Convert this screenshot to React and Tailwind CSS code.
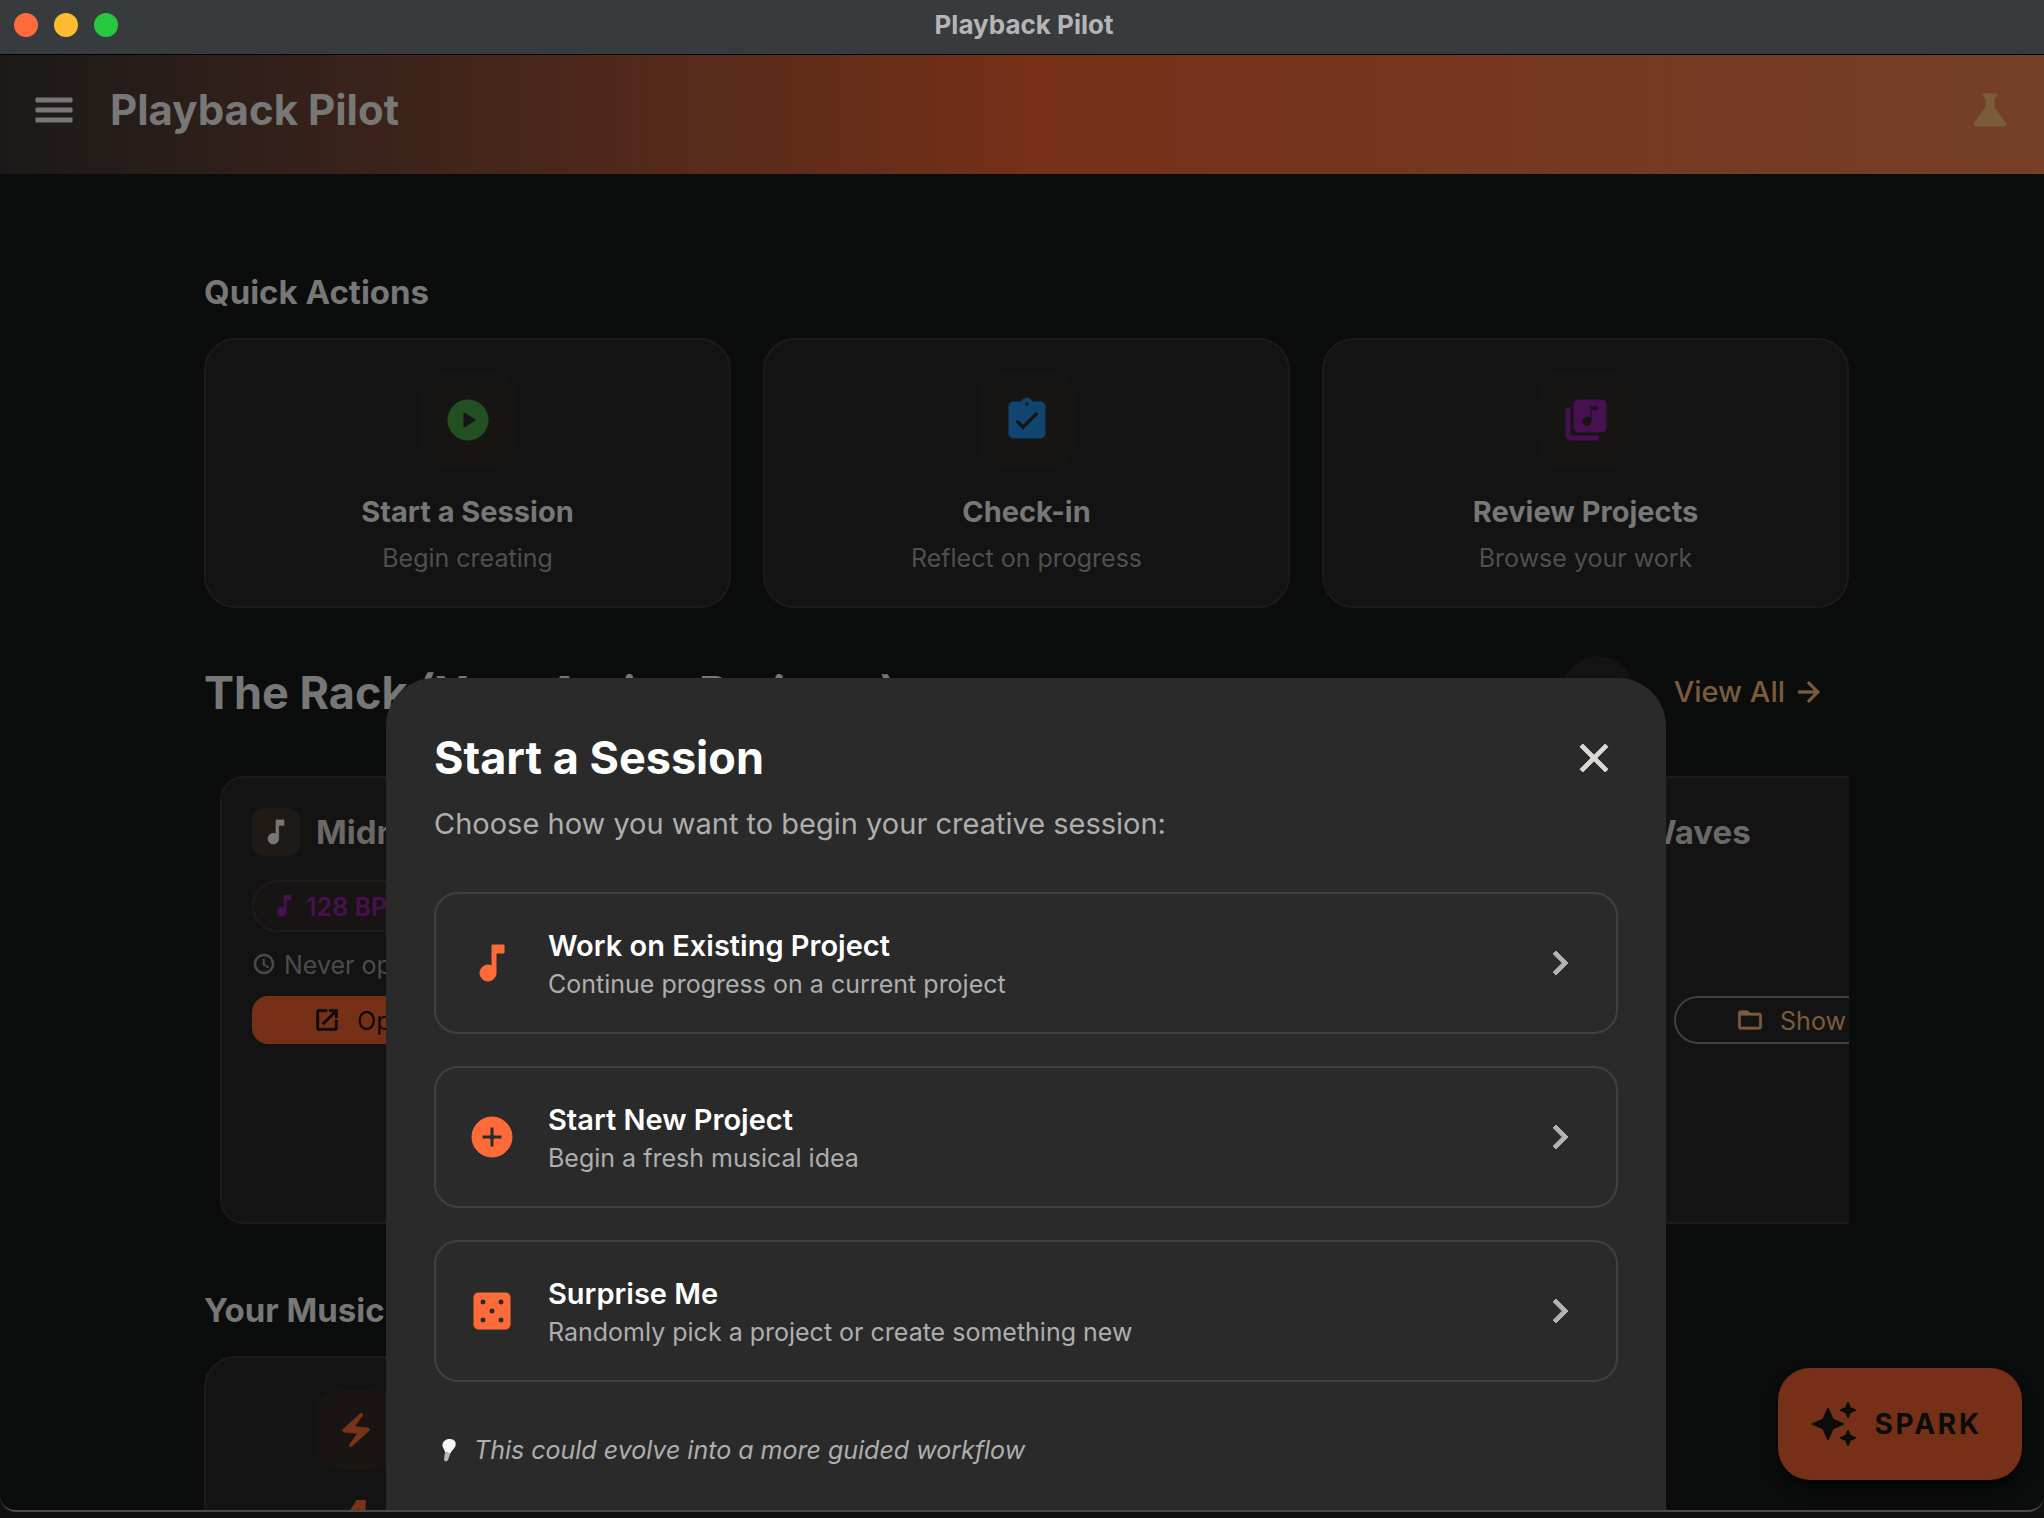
import React from 'react';
import {
  MdMenu,
  MdScience,
  MdPlayCircle,
  MdAssignmentTurnedIn,
  MdLibraryMusic,
  MdArrowForward,
  MdRefresh,
  MdMusicNote,
  MdSchedule,
  MdOpenInNew,
  MdFolderOpen,
  MdElectricBolt,
  MdAutoAwesome,
  MdClose,
  MdChevronRight,
  MdAddCircle,
  MdCasino,
} from 'react-icons/md';

const quickActions = [
  { title: 'Start a Session', text: 'Begin creating', Icon: MdPlayCircle, color: 'text-[#235023]' },
  { title: 'Check-in', text: 'Reflect on progress', Icon: MdAssignmentTurnedIn, color: 'text-[#0f4570]' },
  { title: 'Review Projects', text: 'Browse your work', Icon: MdLibraryMusic, color: 'text-[#471151]' },
];

const projects = [
  { name: 'Midnight Groove', bpm: '128 BPM' },
  { name: 'Golden Hour', bpm: '96 BPM' },
  { name: 'Electrical Waves', bpm: '140 BPM' },
];

const stats = [
  { value: '4', label: 'Sessions' },
  { value: '3', label: 'Projects' },
  { value: '2', label: 'Ideas' },
  { value: '1', label: 'Streak' },
];

const options = [
  { title: 'Work on Existing Project', text: 'Continue progress on a current project', Icon: MdMusicNote },
  { title: 'Start New Project', text: 'Begin a fresh musical idea', Icon: MdAddCircle },
  { title: 'Surprise Me', text: 'Randomly pick a project or create something new', Icon: MdCasino },
];

const TitleBar = () => (
  <div className="relative flex h-[55px] shrink-0 items-center justify-center border-b border-black bg-[#383b3d] pb-1 pl-1">
    <div className="absolute left-3.5 flex gap-4">
      <button aria-label="Close window" className="size-6 rounded-full bg-[#ff6b3b]" />
      <button aria-label="Minimize window" className="size-6 rounded-full bg-[#fdbc2e]" />
      <button aria-label="Zoom window" className="size-6 rounded-full bg-[#27c840]" />
    </div>
    <span className="text-[26px] leading-8 font-bold text-[#b4b5b6]">Playback Pilot</span>
  </div>
);

const Header = () => (
  <header className="flex h-[119px] shrink-0 items-center gap-8 bg-linear-to-r from-[#1b1918] via-[#753017] to-[#753f28] px-[30px] pb-2.5">
    <button aria-label="Open menu" className="text-[#777777]">
      <MdMenu size={48} strokeWidth={0.5} />
    </button>
    <h1 className="flex-1 text-[42px] leading-12 font-bold text-[#777777]">Playback Pilot</h1>
    <button aria-label="Experiments" className="text-[#7a5c3a]">
      <MdScience size={48} strokeWidth={0.5} />
    </button>
  </header>
);

const QuickAction = ({ title, text, Icon, color }) => (
  <button className="flex h-[270px] flex-col items-center rounded-4xl border-2 border-[#1e1a18] bg-[#131313] pt-8">
    <span className={`flex size-24 items-center justify-center rounded-3xl bg-[#171513] ${color}`}>
      <Icon size={48} strokeWidth={0.5} />
    </span>
    <span className="mt-[26px] text-[29px] leading-9 font-bold text-[#777777]">{title}</span>
    <span className="mt-3 text-[25px] leading-8 text-[#4f4f4f]">{text}</span>
  </button>
);

const ProjectCard = ({ name, bpm }) => (
  <article className="flex h-[448px] w-[560px] shrink-0 flex-col rounded-3xl border-2 border-[#1e1a18] bg-[#131313] p-[30px]">
    <div className="flex items-center gap-4">
      <span className="flex size-12 items-center justify-center rounded-xl bg-[#201a17] text-[#777777]">
        <MdMusicNote size={32} strokeWidth={0.5} />
      </span>
      <h3 className="text-[33px] leading-10 font-bold text-[#6c6866]">{name}</h3>
    </div>
    <div className="mt-6 flex h-13 items-center gap-2 self-start rounded-full border-2 border-[#1f1b1a] bg-[#171413] px-4 text-[#471151]">
      <MdMusicNote size={28} strokeWidth={0.5} />
      <span className="pt-0.5 text-[25px] leading-8 font-semibold">{bpm}</span>
    </div>
    <div className="mt-4 flex h-8 items-center gap-2 text-[#4c4c4c]">
      <MdSchedule size={24} strokeWidth={0.5} />
      <span className="pt-0.5 text-[25px] leading-8">Never opened</span>
    </div>
    <div className="mt-4 flex gap-4">
      <button className="flex h-12 flex-1 items-center justify-center gap-4 rounded-2xl bg-[#753017] pr-2 text-[#0b0d0c]">
        <MdOpenInNew size={28} strokeWidth={0.5} />
        <span className="pt-0.5 text-[25px] leading-8">Open</span>
      </button>
      <button className="flex h-12 flex-1 items-center justify-center gap-4 rounded-full border-2 border-[#3f3f3f] pr-2 text-[#7a5c3d]">
        <MdFolderOpen size={28} strokeWidth={0.5} />
        <span className="pt-0.5 text-[25px] leading-8">Show</span>
      </button>
    </div>
  </article>
);

const StatCard = ({ value, label }) => (
  <div className="flex h-80 flex-col items-center rounded-4xl border-2 border-[#1e1a18] bg-[#131313] pt-8">
    <span className="flex size-20 items-center justify-center rounded-3xl bg-[#1a1513] text-[#78341b]">
      <MdElectricBolt size={40} strokeWidth={0.5} />
    </span>
    <span className="mt-4 text-5xl leading-16 font-bold text-[#78341b]">{value}</span>
    <span className="text-[25px] leading-8 text-[#4f4f4f]">{label}</span>
  </div>
);

const SessionDialog = () => (
  <section
    role="dialog"
    aria-labelledby="session-title"
    className="absolute inset-x-0 top-[678px] bottom-0 mx-auto w-[1280px] translate-x-1 rounded-t-[48px] bg-[#2a2a2a] px-12 pt-11"
  >
    <div className="flex items-center justify-between">
      <h2 id="session-title" className="text-[45px] leading-[72px] font-bold text-white">
        Start a Session
      </h2>
      <button aria-label="Close" className="text-[#dcd8d6]">
        <MdClose size={48} strokeWidth={0.5} />
      </button>
    </div>
    <p className="mt-2.5 text-[29px] leading-10 text-[#aeaeae]">Choose how you want to begin your creative session:</p>
    <div className="mt-12 flex flex-col gap-8">
      {options.map(({ title, text, Icon }) => (
        <button
          key={title}
          className="flex h-[142px] items-center gap-8 rounded-3xl border-2 border-[#404040] px-8 text-left"
        >
          <Icon size={48} strokeWidth={0.5} className="shrink-0 text-[#ff6b38]" />
          <span className="flex flex-1 flex-col pt-0.5">
            <span className="text-[29px] leading-10 font-semibold text-white">{title}</span>
            <span className="text-[25px] leading-9 text-[#aeaeae]">{text}</span>
          </span>
          <MdChevronRight size={48} strokeWidth={0.5} className="shrink-0 text-[#b0b4b4]" />
        </button>
      ))}
    </div>
    <p className="mt-12 flex items-center gap-4 text-[25px] leading-10 text-[#aeaeae]">
      <svg width="24" height="24" viewBox="0 0 24 24" aria-hidden="true">
        <path d="M16 1c5 0 7 4 5 8-1.600 2.600-3.600 4-4.600 6.500L11 14C10.500 11 8 9.500 8.500 6.500 9 3 12 1 16 1z" fill="#f7f5f0" />
        <path d="M11 14l5.400 1.500L14 22c-1 2-4 1.500-4-.5z" fill="#b9b6b4" />
      </svg>
      <em>This could evolve into a more guided workflow</em>
    </p>
  </section>
);

export default function App() {
  return (
    <div className="h-screen overflow-hidden bg-[#101010] pb-1.5 font-['Inter',sans-serif] [&_path[fill=none]]:hidden">
      <div className="relative flex h-full flex-col overflow-hidden rounded-b-2xl border-b-2 border-[#4a4a4a] bg-[#0b0d0c]">
        <TitleBar />
        <Header />
        <main className="min-h-0 flex-1 overflow-hidden pt-[98px] pr-[195px] pl-51">
          <h2 className="text-[33px] leading-10 font-bold text-[#777777]">Quick Actions</h2>
          <div className="mt-[26px] grid grid-cols-3 gap-8">
            {quickActions.map((action) => (
              <QuickAction key={action.title} {...action} />
            ))}
          </div>

          <div className="mt-12 flex h-[72px] items-center">
            <h2 className="flex-1 pt-0.5 text-[45px] leading-14 font-bold text-[#777777]">The Rack (Your Active Projects)</h2>
            <button
              aria-label="Refresh"
              className="flex size-[72px] items-center justify-center rounded-full bg-[#131313] text-[#777777]"
            >
              <MdRefresh size={40} />
            </button>
            <a href="#projects" className="ml-2 flex items-center gap-2 pr-6 pl-8 text-[#7a5c3d]">
              <span className="text-[29px] leading-10 font-medium">View All</span>
              <MdArrowForward size={32} strokeWidth={0.5} />
            </a>
          </div>
          <div className="mt-12 flex gap-6 overflow-hidden pl-4">
            {projects.map((project) => (
              <ProjectCard key={project.name} {...project} />
            ))}
          </div>

          <h2 className="mt-[66px] text-[33px] leading-10 font-bold text-[#777777]">Your Music Stats</h2>
          <div className="mt-[26px] grid grid-cols-5 gap-8">
            {stats.map((stat) => (
              <StatCard key={stat.label} {...stat} />
            ))}
          </div>
        </main>

        <SessionDialog />

        <button className="absolute right-[22px] bottom-[30px] flex h-28 items-center gap-4 rounded-4xl bg-[#753017] pr-10 pl-8 text-[#0b0d0c] shadow-lg shadow-black/60">
          <MdAutoAwesome size={48} strokeWidth={0.5} />
          <span className="text-[28px] leading-10 font-bold tracking-widest">SPARK</span>
        </button>
      </div>
    </div>
  );
}
